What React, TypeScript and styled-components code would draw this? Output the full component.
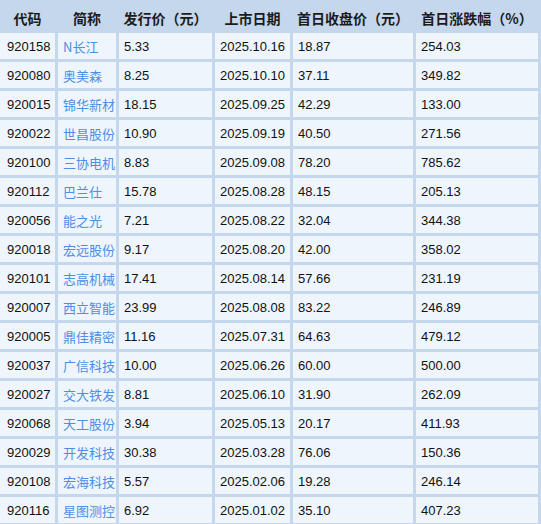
import React from "react";
import styled, { createGlobalStyle } from "styled-components";

const Global = createGlobalStyle`
  html, body { margin: 0; padding: 0; background: #c5d7ec; }
  body { font-family: "Liberation Sans", "Noto Sans CJK SC", sans-serif; }
`;

const Grid = styled.div`
  display: grid;
  grid-template-columns: 55px 58px 93px 75px 120px 122px;
  grid-auto-rows: 26px;
  grid-template-rows: 30px;
  column-gap: 3px;
  row-gap: 3px;
  width: 541px;
  background: #c5d7ec;
`;

const Head = styled.div`
  display: flex;
  align-items: center;
  justify-content: center;
  padding-top: 5px;
  font-family: "Noto Sans CJK SC", sans-serif;
  font-weight: 700;
  font-size: 14px;
  color: #1b1b1b;
  white-space: nowrap;
`;

const Cell = styled.div<{ $first?: boolean; $link?: boolean }>`
  display: flex;
  align-items: center;
  padding-left: ${(p) => (p.$first ? "7px" : "5px")};
  background: #eef5fd;
  font-size: 13px;
  color: ${(p) => (p.$link ? "#4f8ee6" : "#111")};
  font-family: ${(p) =>
    p.$link ? `"Noto Sans CJK SC", sans-serif` : `"Liberation Sans", "Noto Sans CJK SC", sans-serif`};
  white-space: nowrap;
  overflow: hidden;
`;

const headers = ["代码", "简称", "发行价（元）", "上市日期", "首日收盘价（元）", "首日涨跌幅（%）"];

const rows: [string, string, string, string, string, string][] = [
  ["920158", "N长江", "5.33", "2025.10.16", "18.87", "254.03"],
  ["920080", "奥美森", "8.25", "2025.10.10", "37.11", "349.82"],
  ["920015", "锦华新材", "18.15", "2025.09.25", "42.29", "133.00"],
  ["920022", "世昌股份", "10.90", "2025.09.19", "40.50", "271.56"],
  ["920100", "三协电机", "8.83", "2025.09.08", "78.20", "785.62"],
  ["920112", "巴兰仕", "15.78", "2025.08.28", "48.15", "205.13"],
  ["920056", "能之光", "7.21", "2025.08.22", "32.04", "344.38"],
  ["920018", "宏远股份", "9.17", "2025.08.20", "42.00", "358.02"],
  ["920101", "志高机械", "17.41", "2025.08.14", "57.66", "231.19"],
  ["920007", "西立智能", "23.99", "2025.08.08", "83.22", "246.89"],
  ["920005", "鼎佳精密", "11.16", "2025.07.31", "64.63", "479.12"],
  ["920037", "广信科技", "10.00", "2025.06.26", "60.00", "500.00"],
  ["920027", "交大铁发", "8.81", "2025.06.10", "31.90", "262.09"],
  ["920068", "天工股份", "3.94", "2025.05.13", "20.17", "411.93"],
  ["920029", "开发科技", "30.38", "2025.03.28", "76.06", "150.36"],
  ["920108", "宏海科技", "5.57", "2025.02.06", "19.28", "246.14"],
  ["920116", "星图测控", "6.92", "2025.01.02", "35.10", "407.23"],
];

export default function App() {
  return (
    <>
      <Global />
      <Grid>
        {headers.map((h) => (
          <Head key={h}>{h}</Head>
        ))}
        {rows.map((r) =>
          r.map((v, i) => (
            <Cell key={r[0] + i} $first={i === 0} $link={i === 1}>
              {v}
            </Cell>
          ))
        )}
      </Grid>
    </>
  );
}
